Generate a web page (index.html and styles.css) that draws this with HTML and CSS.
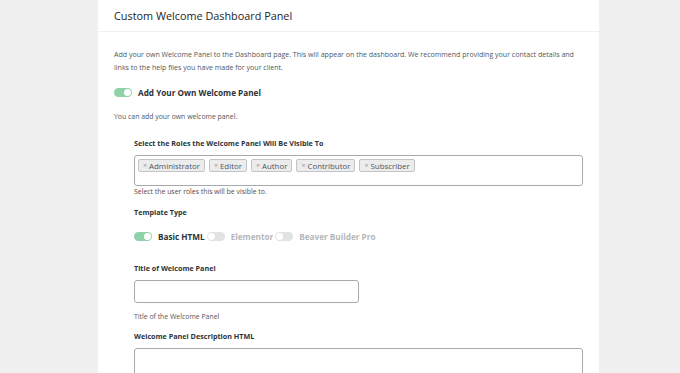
FILE: index.html
```html
<!DOCTYPE html>
<html lang="en">
<head>
  <meta charset="UTF-8">
  <meta name="viewport" content="width=device-width, initial-scale=1.0">
  <title>Custom Welcome Dashboard Panel</title>
  <link rel="stylesheet" href="styles.css">
</head>
<body>

  <div class="panel">
    <div class="panel-header">
      <h2>Custom Welcome Dashboard Panel</h2>
    </div>

    <div class="panel-body">
      <p class="intro">Add your own Welcome Panel to the Dashboard page. This will appear on the dashboard. We recommend providing your contact details and links to the help files you have made for your client.</p>

      <div class="toggle-row main-toggle">
        <span class="toggle on"></span>
        <span class="toggle-label">Add Your Own Welcome Panel</span>
      </div>

      <p class="help first-help">You can add your own welcome panel.</p>

      <div class="settings">
        <label class="field-label">Select the Roles the Welcome Panel Will Be Visible To</label>
        <div class="role-select">
          <span class="tag"><span class="x">×</span>Administrator</span>
          <span class="tag"><span class="x">×</span>Editor</span>
          <span class="tag"><span class="x">×</span>Author</span>
          <span class="tag"><span class="x">×</span>Contributor</span>
          <span class="tag"><span class="x">×</span>Subscriber</span>
        </div>
        <p class="help roles-help">Select the user roles this will be visible to.</p>

        <label class="field-label template-label">Template Type</label>
        <div class="toggle-row template-row">
          <span class="toggle on"></span>
          <span class="toggle-label">Basic HTML</span>
          <span class="toggle"></span>
          <span class="toggle-label muted">Elementor</span>
          <span class="toggle"></span>
          <span class="toggle-label muted">Beaver Builder Pro</span>
        </div>

        <label class="field-label title-label">Title of Welcome Panel</label>
        <input type="text" class="text-input">
        <p class="help title-help">Title of the Welcome Panel</p>

        <label class="field-label desc-label">Welcome Panel Description HTML</label>
        <textarea class="text-area"></textarea>
      </div>
    </div>
  </div>

</body>
</html>
```

FILE: styles.css
```css
body {
  background-color: #f0f0f1;
  color: #3c434a;
  font-family: "Open Sans", "Noto Sans", sans-serif;
  margin: 0;
  padding: 0;
  overflow: hidden;
}

.panel {
  background-color: #fff;
  margin-left: 98px;
  width: 501px;
  min-height: 100vh;
}

.panel-header {
  height: 31px;
  border-bottom: 1px solid #f0f0f1;
  padding-left: 16px;
  display: flex;
  align-items: center;
}

.panel-header h2 {
  margin: 0;
  font-size: 10.85px;
  font-weight: 400;
  color: #1d2327;
}

.panel-body {
  padding: 0 16px;
}

.intro {
  margin: 16px 0 0;
  font-size: 7.05px;
  line-height: 13px;
  color: #50575e;
}

.help {
  margin: 0;
  font-size: 6.9px;
  line-height: 10px;
  color: #50575e;
}

.first-help {
  margin-top: 15px;
}

/* toggles */
.toggle-row {
  display: flex;
  align-items: center;
  height: 10px;
}

.main-toggle {
  margin-top: 13px;
}

.toggle {
  position: relative;
  width: 18px;
  height: 9px;
  border-radius: 5px;
  background-color: #e2e2e2;
  flex-shrink: 0;
}

.toggle::after {
  content: "";
  position: absolute;
  top: 1px;
  left: 1px;
  width: 7px;
  height: 7px;
  border-radius: 50%;
  background-color: #fff;
}

.toggle.on {
  background-color: #8fd1a8;
}

.toggle.on::after {
  left: 10px;
}

.toggle-label {
  margin: 0 2px 0 6px;
  font-size: 8.2px;
  font-weight: 700;
  color: #2c3338;
}

.toggle-label.muted {
  color: #b4b7ba;
}

/* settings block */
.settings {
  padding-left: 20px;
  padding-right: 0;
}

.field-label {
  display: block;
  margin-top: 15px;
  font-size: 7.2px;
  line-height: 12px;
  font-weight: 700;
  color: #2c3338;
}

.role-select {
  margin-top: 6px;
  height: 31px;
  box-sizing: border-box;
  border: 1px solid #a7aaad;
  border-radius: 3px;
  padding: 3px 3px;
  display: flex;
  align-items: flex-start;
  gap: 4px;
}

.tag {
  display: flex;
  align-items: center;
  height: 13px;
  box-sizing: border-box;
  padding: 0 4px;
  background-color: #ececec;
  border: 1px solid #c3c4c7;
  border-radius: 2px;
  font-size: 7.9px;
  color: #50575e;
}

.tag .x {
  color: #999;
  margin-right: 2px;
  font-size: 7px;
}

.roles-help {
  margin-top: 1px;
  color: #5e4644;
}

.template-label {
  margin-top: 9px;
}

.template-row {
  margin-top: 13px;
}

.title-label {
  margin-top: 21px;
}

.text-input {
  display: block;
  margin: 6px 0 0;
  width: 225px;
  height: 23px;
  box-sizing: border-box;
  border: 1px solid #a7aaad;
  border-radius: 3px;
  background: #fff;
}

.title-help {
  margin-top: 9px;
}

.desc-label {
  margin-top: 8px;
}

.text-area {
  display: block;
  margin: 6px 0 0;
  width: 449px;
  height: 60px;
  box-sizing: border-box;
  border: 1px solid #a7aaad;
  border-radius: 3px;
  resize: none;
}
```
